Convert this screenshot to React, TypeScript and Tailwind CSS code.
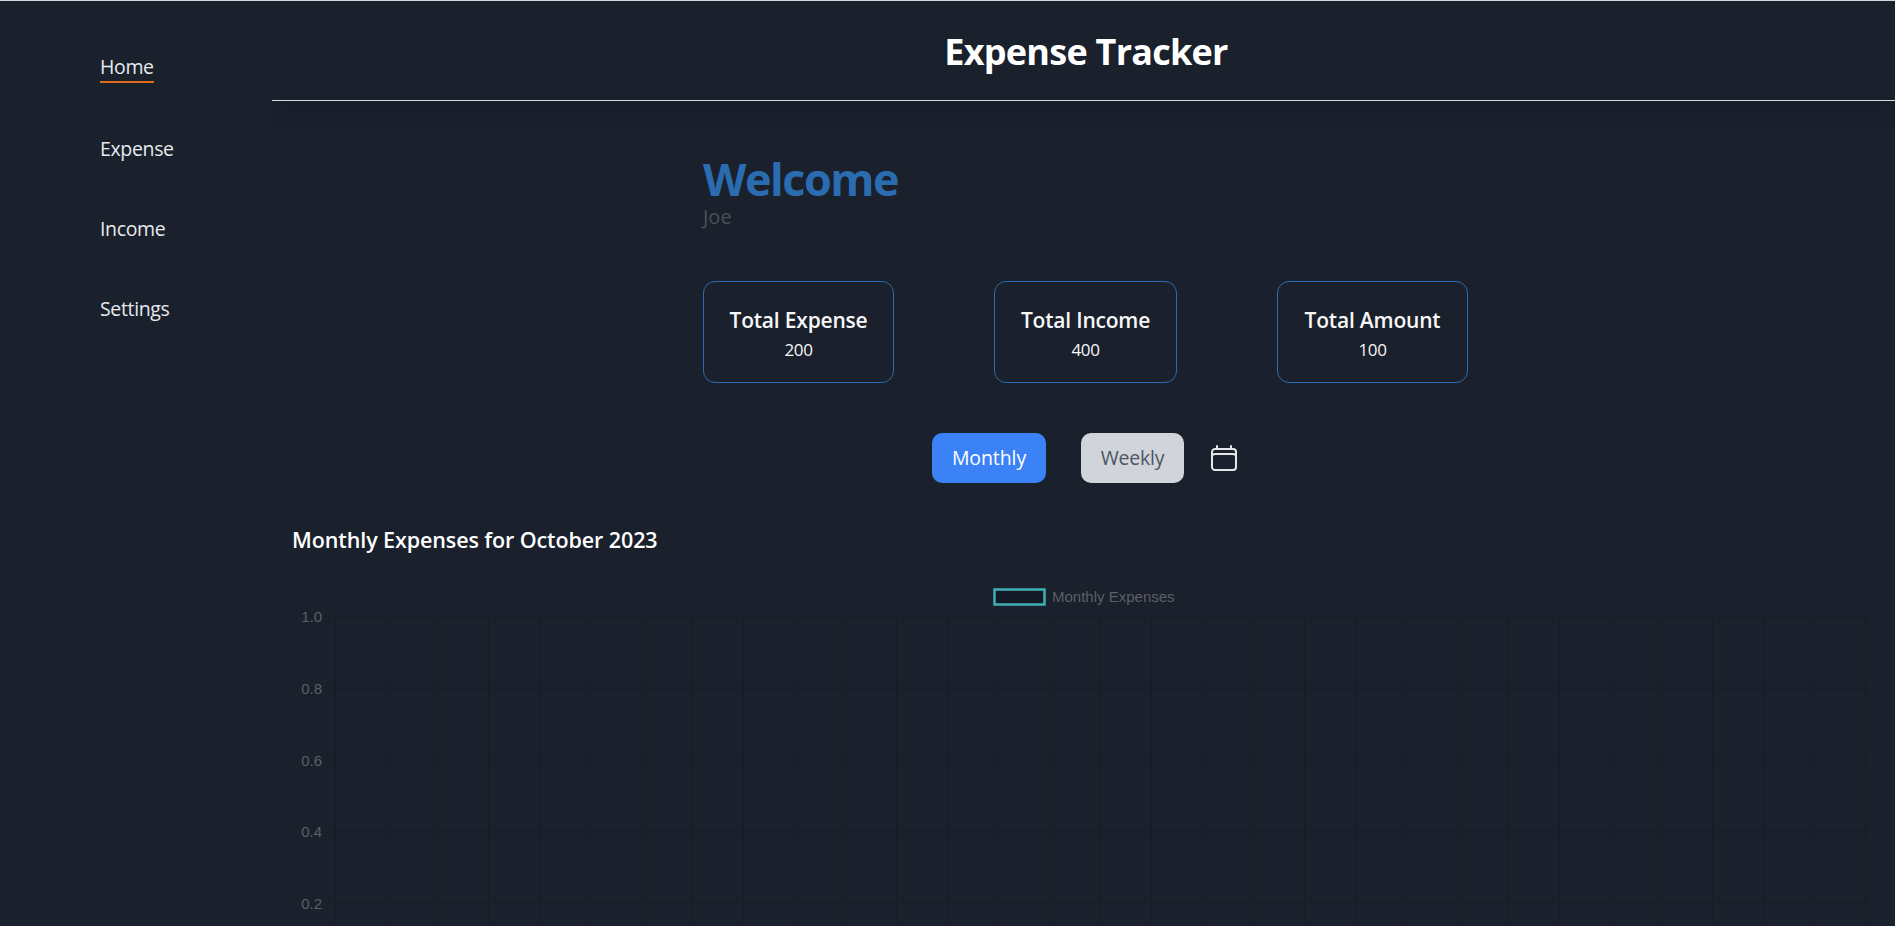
const navItems = ['Home', 'Expense', 'Income', 'Settings']

const stats = [
  { label: 'Total Expense', value: 200, width: 'w-[191px]' },
  { label: 'Total Income', value: 400, width: 'w-[183px]' },
  { label: 'Total Amount', value: 100, width: 'w-[191px]' },
]

const yTicks = ['1.0', '0.8', '0.6', '0.4', '0.2']

function ExpenseChart() {
  const columns = Array.from({ length: 31 }, (_, i) => 63.5 + i * 51)

  return (
    <svg className="block w-[1623px] h-[351px] shrink-0" viewBox="0 0 1623 351" fill="none">
      {/* legend */}
      <rect x="722.5" y="15.5" width="50" height="15" fill="#141a25" stroke="#3fb0b2" strokeWidth="2.5" />
      <text x="780" y="27.5" fontSize="15" fill="#5c5f64" fontFamily="'Liberation Sans', Arial, sans-serif">
        Monthly Expenses
      </text>

      {/* grid */}
      {columns.map((x) => (
        <line key={x} x1={x} x2={x} y1="42" y2="351" stroke="#171c27" strokeWidth="1" />
      ))}
      {yTicks.map((tick, i) => {
        const y = 42.5 + i * 71.75
        return (
          <g key={tick}>
            <line x1="53" x2="1593.5" y1={y} y2={y} stroke="#171c27" strokeWidth="1" />
            <text
              x="50"
              y={y + 5.5}
              textAnchor="end"
              fontSize="15"
              fill="#5c5f64"
              fontFamily="'Liberation Sans', Arial, sans-serif"
            >
              {tick}
            </text>
          </g>
        )
      })}
    </svg>
  )
}

export default function App() {
  return (
    <div className="flex h-screen overflow-hidden border-t border-[#d5d7db] bg-[#1a202c] font-['Open_Sans',sans-serif] text-white">
      {/* Sidebar */}
      <aside className="w-[272px] shrink-0 pl-[100px] pt-[52px]">
        <nav className="flex flex-col items-start gap-[52px]">
          {navItems.map((item, i) => (
            <a
              key={item}
              href="#"
              className={
                i === 0
                  ? 'border-b-2 border-[#dd6b20] pb-[1px] text-[19.5px] leading-[27px] tracking-[-0.35px] text-[#e8eaed]'
                  : 'pb-[1px] text-[19.5px] leading-[27px] tracking-[-0.35px] text-[#e8eaed]'
              }
            >
              {item}
            </a>
          ))}
        </nav>
      </aside>

      {/* Main column */}
      <main className="flex min-w-0 flex-1 flex-col overflow-hidden">
        <header className="flex h-[100px] shrink-0 items-center justify-center border-b border-[#d5d7db] pt-[2px] pl-[5px] shadow-[0_4px_24px_rgba(20,10,40,0.18)]">
          <h1 className="text-[36px] font-bold leading-[48px] tracking-[-0.75px] text-white">Expense Tracker</h1>
        </header>

        <section className="ml-[431px] mt-[51px] w-fit">
          <h2 className="text-[45px] font-bold leading-[54px] tracking-[-1.5px] text-[#2b6cb0]">Welcome</h2>
          <p className="text-[20px] leading-[22px] text-[#4a5058]">Joe</p>

          <div className="mt-[53px] flex gap-[100px]">
            {stats.map((stat) => (
              <div
                key={stat.label}
                className={`flex h-[102px] flex-col items-center justify-center gap-[2px] rounded-xl border border-[#2b6cb0] pt-[4px] ${stat.width}`}
              >
                <h3 className="text-[21px] font-semibold leading-[30px] tracking-[-0.2px] text-[#f7f7f8]">{stat.label}</h3>
                <p className="text-[17px] leading-[26px] tracking-[-0.4px] text-[#f7f7f8]">{stat.value}</p>
              </div>
            ))}
          </div>
        </section>

        <div className="mt-[50px] flex items-center justify-center pl-[5px]">
          <button className="h-[50px] w-[114px] rounded-[10px] bg-[#3b82f6] text-[19.5px] tracking-[-0.1px] text-white">Monthly</button>
          <button className="ml-[35px] h-[50px] w-[103px] rounded-[10px] bg-[#d1d5db] text-[19.5px] tracking-[-0.2px] text-[#4b5563]">
            Weekly
          </button>
          <svg
            className="ml-[24px] h-8 w-8"
            fill="none"
            viewBox="0 0 24 24"
            stroke="#e5e7eb"
            strokeWidth={1.5}
          >
            <path
              strokeLinecap="round"
              strokeLinejoin="round"
              d="M6.75 3v2.25M17.25 3v2.25M3 18.75V7.5a2.25 2.25 0 012.25-2.25h13.5A2.25 2.25 0 0121 7.5v11.25m-18 0A2.25 2.25 0 005.25 21h13.5A2.25 2.25 0 0021 18.75m-18 0v-7.5A2.25 2.25 0 015.25 9h13.5A2.25 2.25 0 0121 11.25v7.5"
            />
          </svg>
        </div>

        <h2 className="ml-[20px] mt-[41px] text-[21.5px] font-semibold leading-[32px] tracking-[-0.1px] text-white">
          Monthly Expenses for October 2023
        </h2>
        <div className="mt-[18px]">
          <ExpenseChart />
        </div>
      </main>
    </div>
  )
}
